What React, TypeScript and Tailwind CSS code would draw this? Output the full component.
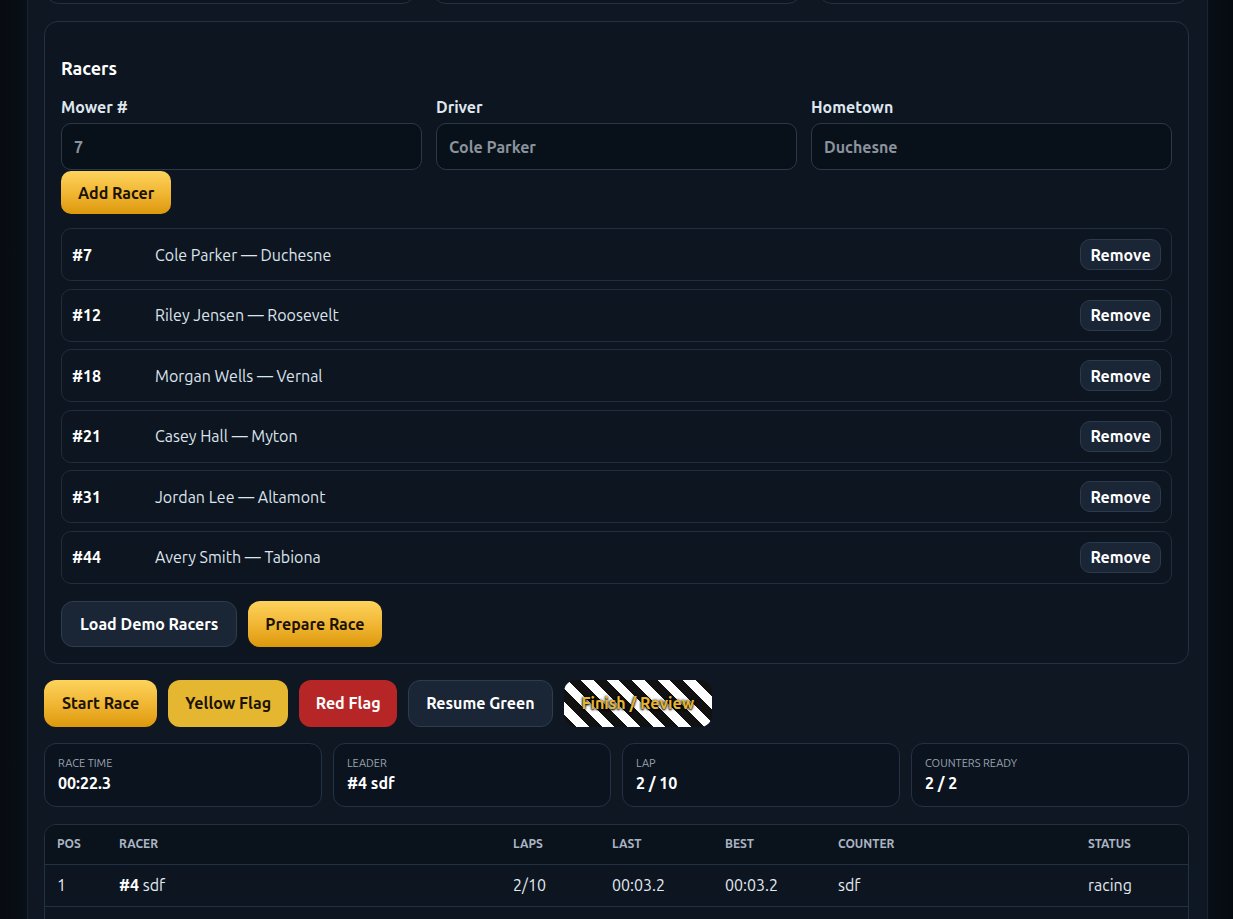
import React from "react";

const font = { fontFamily: '"Ubuntu", "Lato", "Noto Sans", sans-serif' };

const racers = [
  { num: 7, name: "Cole Parker", town: "Duchesne" },
  { num: 12, name: "Riley Jensen", town: "Roosevelt" },
  { num: 18, name: "Morgan Wells", town: "Vernal" },
  { num: 21, name: "Casey Hall", town: "Myton" },
  { num: 31, name: "Jordan Lee", town: "Altamont" },
  { num: 44, name: "Avery Smith", town: "Tabiona" },
];

const stats = [
  { label: "Race Time", value: "00:22.3" },
  { label: "Leader", value: "#4 sdf" },
  { label: "Lap", value: "2 / 10" },
  { label: "Counters Ready", value: "2 / 2" },
];

const cols = "grid grid-cols-[62px_394px_99px_113px_113px_250px_1fr]";

function Field({ label, placeholder }: { label: string; placeholder: string }) {
  return (
    <label className="flex flex-col">
      <span className="text-base font-bold leading-6 text-[#dfe6ee]">{label}</span>
      <input
        placeholder={placeholder}
        className="mt-1 h-[47px] rounded-[10px] border border-[#2b394b] bg-[#08101a] px-3 text-base font-bold text-white placeholder:text-[#8b939c] focus:outline-none"
      />
    </label>
  );
}

const gold =
  "bg-[linear-gradient(180deg,#fdd35c_0%,#f0b431_55%,#dc980c_100%)] text-[#1a1204]";

export default function App() {
  return (
    <div
      style={font}
      className="min-h-screen overflow-hidden bg-[linear-gradient(90deg,#070b11_0%,#0a1119_3%,#0a1119_97%,#060a10_100%)]"
    >
      <div className="ml-[27px] w-[1181px] border-x border-[#1b2531] bg-[#0f1822] pb-10 pl-4 pr-[18px]">
        {/* previous section, scrolled mostly out of view */}
        <div className="-mt-[76px] grid grid-cols-3 gap-4 pl-px">
          <div className="h-20 rounded-[14px] border border-[#243143] bg-[#0c1520]" />
          <div className="h-20 rounded-[14px] border border-[#243143] bg-[#0c1520]" />
          <div className="h-20 rounded-[14px] border border-[#243143] bg-[#0c1520]" />
        </div>

        <section className="mt-[17px] rounded-[14px] border border-[#243143] bg-[#0c1520] px-4 pb-4 pt-[32px]">
          <h2 className="text-lg font-semibold leading-7 text-white">Racers</h2>
          <div className="mt-[13px] grid grid-cols-3 gap-x-[14px]">
            <Field label="Mower #" placeholder="7" />
            <Field label="Driver" placeholder="Cole Parker" />
            <Field label="Hometown" placeholder="Duchesne" />
          </div>
          <button className={`mt-px h-[43px] rounded-[10px] px-[17px] text-base font-bold ${gold}`}>
            Add Racer
          </button>

          <ul className="mt-[14px] flex flex-col gap-[7.6px]">
            {racers.map((r) => (
              <li
                key={r.num}
                className="grid h-[53px] grid-cols-[83px_1fr_auto] items-center rounded-[10px] border border-[#212d3d] pl-[10px] pr-[10px]"
              >
                <span className="text-base font-bold text-white">#{r.num}</span>
                <span className="text-base text-[#dde4ec]">
                  {r.name} — {r.town}
                </span>
                <button className="h-[31px] w-[81px] rounded-[10px] border border-[#2c3a4d] bg-[#1a2535] text-base font-bold text-white">
                  Remove
                </button>
              </li>
            ))}
          </ul>

          <div className="mt-[17px] flex gap-[11px]">
            <button className="h-[46px] rounded-[12px] border border-[#2e3c50] bg-[#1a2535] px-[18px] text-base font-bold text-white">
              Load Demo Racers
            </button>
            <button className={`h-[46px] rounded-[12px] px-[17px] text-base font-bold ${gold}`}>
              Prepare Race
            </button>
          </div>
        </section>

        <div className="mt-[16px] flex gap-[11px]">
          <button className={`h-[47px] rounded-[12px] px-[18px] text-base font-bold ${gold}`}>
            Start Race
          </button>
          <button className="h-[47px] rounded-[12px] bg-[#e5b731] px-[17px] text-base font-bold text-[#1a1204]">
            Yellow Flag
          </button>
          <button className="h-[47px] rounded-[12px] bg-[#b72626] px-[16.5px] text-base font-bold text-white">
            Red Flag
          </button>
          <button className="h-[47px] rounded-[12px] border border-[#2e3c50] bg-[#1a2535] px-[17px] text-base font-bold text-white">
            Resume Green
          </button>
          <button className="h-[47px] rounded-[12px] bg-[repeating-linear-gradient(45deg,#111111_0px,#111111_9px,#ffffff_9px,#ffffff_18px)] px-[18px] text-base font-bold text-[#e8b530] [text-shadow:0_1px_2px_#000,0_0_3px_#000]">
            Finish / Review
          </button>
        </div>

        <div className="mt-4 grid grid-cols-4 gap-[11px]">
          {stats.map((s) => (
            <div
              key={s.label}
              className="h-16 rounded-[12px] border border-[#243143] bg-[#0b131e] px-[13px] pt-[11px]"
            >
              <div className="text-[11px] uppercase leading-4 text-[#9aa5b2]">{s.label}</div>
              <div className="text-base font-bold leading-6 text-white">{s.value}</div>
            </div>
          ))}
        </div>

        <div className="mt-[17px] overflow-hidden rounded-[12px] border border-[#243143] bg-[#0c1520]">
          <div
            className={`${cols} h-[39px] items-center bg-[#0a121c] px-3 text-xs font-bold uppercase text-[#aab5c2]`}
          >
            <span>Pos</span>
            <span>Racer</span>
            <span>Laps</span>
            <span>Last</span>
            <span>Best</span>
            <span>Counter</span>
            <span>Status</span>
          </div>
          <div className={`${cols} h-[42px] items-center border-t border-[#223044] px-3 text-base text-[#e3e9f0]`}>
            <span>1</span>
            <span>
              <b className="text-white">#4</b> sdf
            </span>
            <span>2/10</span>
            <span>00:03.2</span>
            <span>00:03.2</span>
            <span>sdf</span>
            <span>racing</span>
          </div>
          <div className="h-[42px] border-t border-[#223044]" />
        </div>
      </div>
    </div>
  );
}
